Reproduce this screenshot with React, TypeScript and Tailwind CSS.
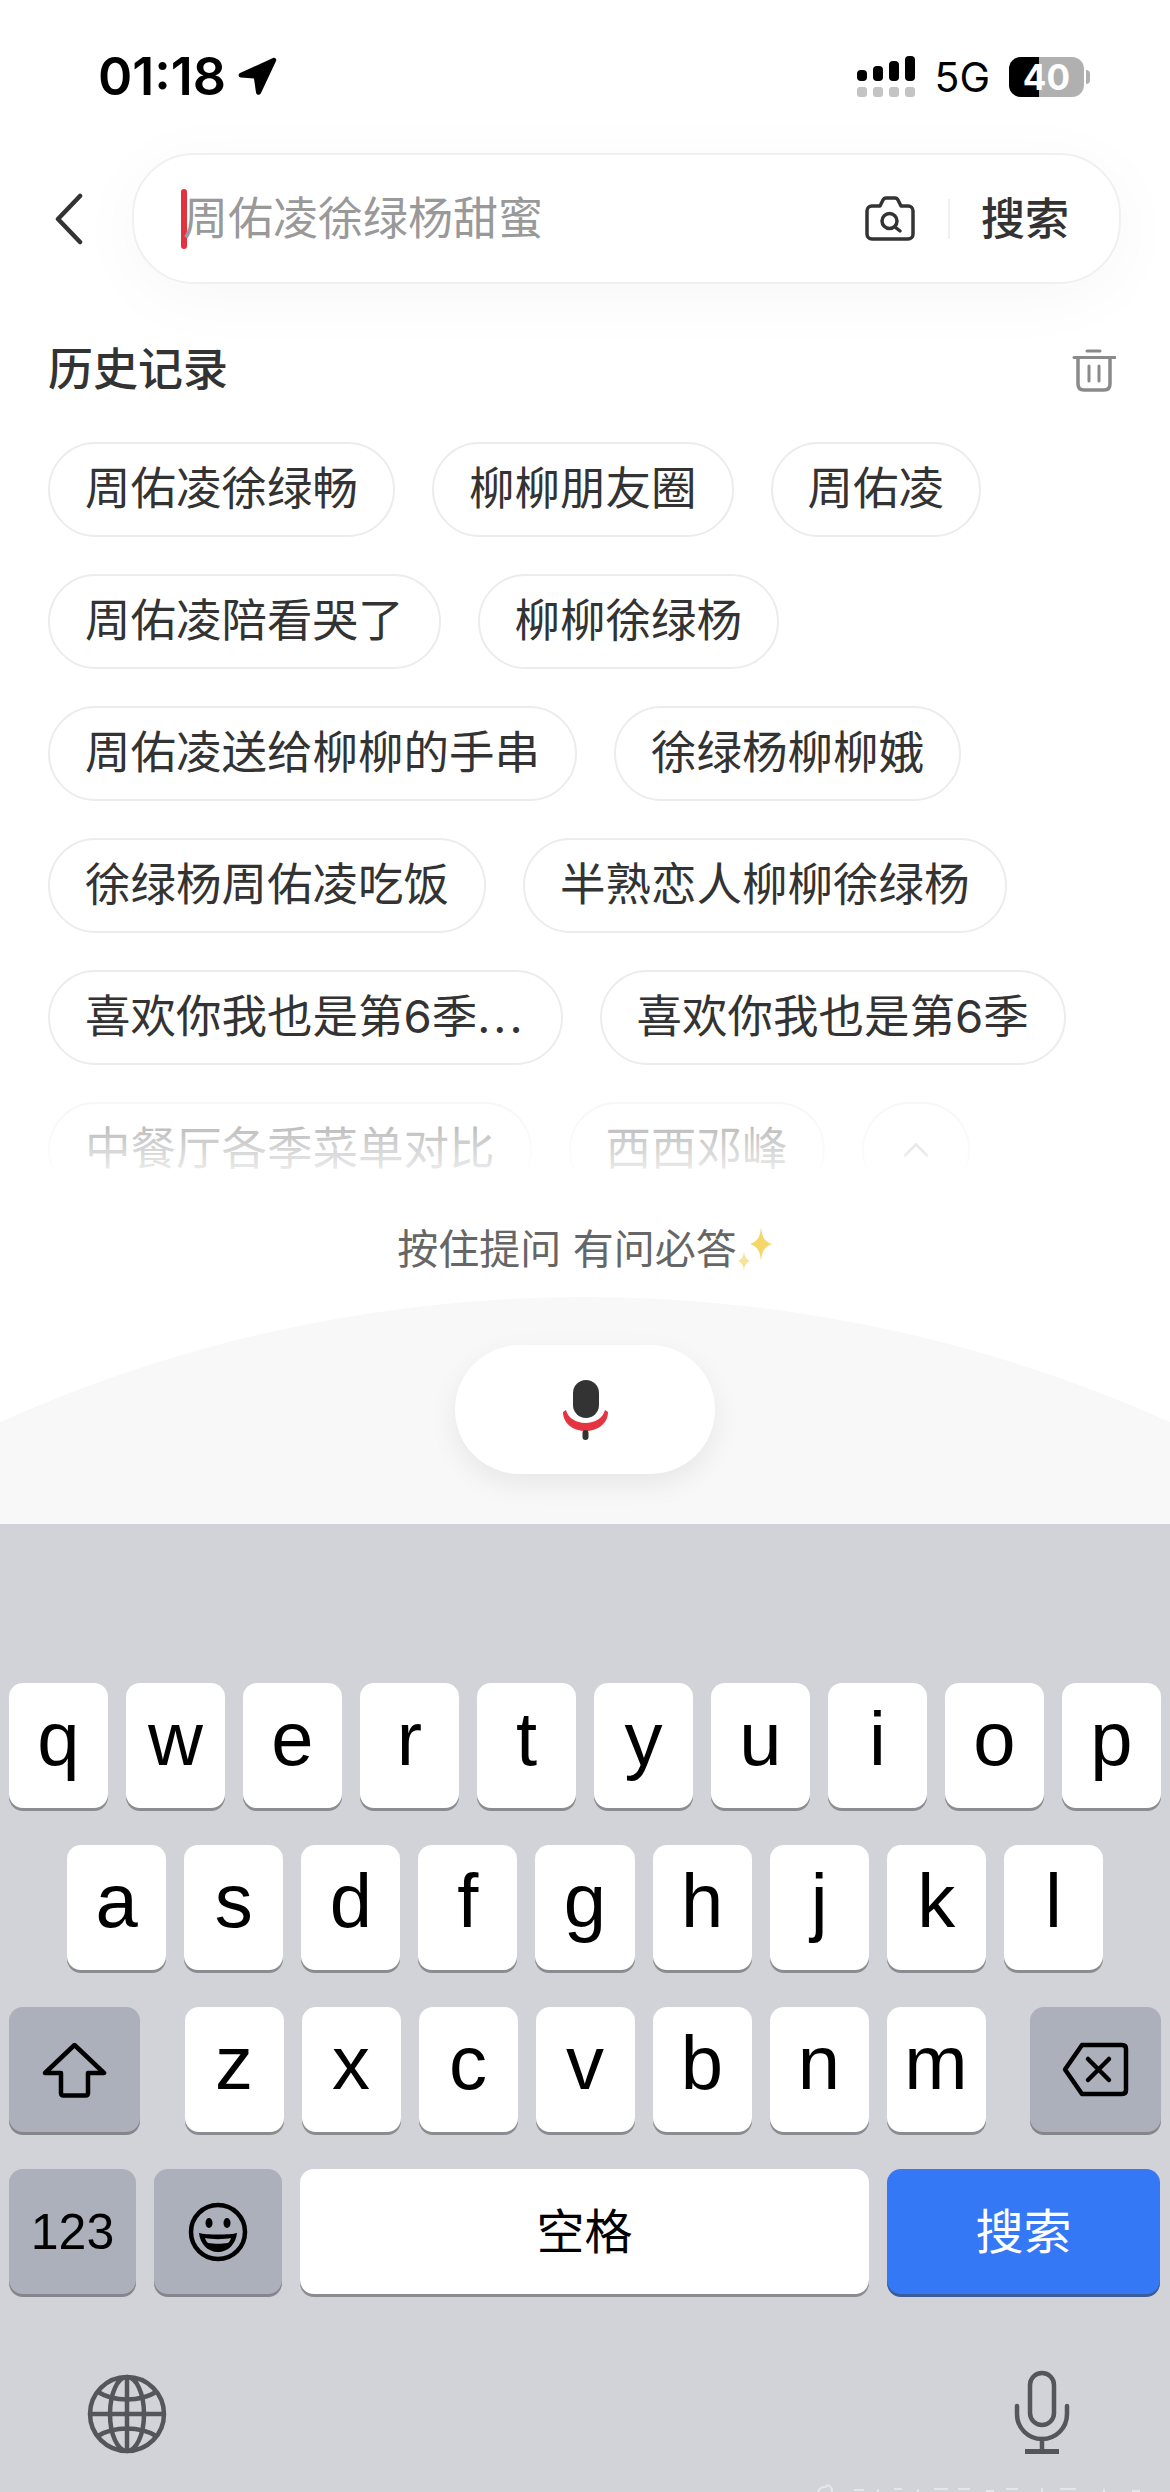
import { ChevronUp } from "lucide-react";

const HISTORY = [
  "周佑凌徐绿畅",
  "柳柳朋友圈",
  "周佑凌",
  "周佑凌陪看哭了",
  "柳柳徐绿杨",
  "周佑凌送给柳柳的手串",
  "徐绿杨柳柳娥",
  "徐绿杨周佑凌吃饭",
  "半熟恋人柳柳徐绿杨",
  "喜欢你我也是第6季...",
  "喜欢你我也是第6季",
  "中餐厅各季菜单对比",
  "西西邓峰",
];

const ROW_1 = ["q", "w", "e", "r", "t", "y", "u", "i", "o", "p"];
const ROW_2 = ["a", "s", "d", "f", "g", "h", "j", "k", "l"];
const ROW_3 = ["z", "x", "c", "v", "b", "n", "m"];

function StatusBar() {
  return (
    <div className="flex h-[153px] items-start justify-between pl-[98px] pr-[80px] pt-[50px] text-black">
      <div className="flex items-center gap-[11px]">
        <span className="text-[52px] font-semibold leading-[54px]">01:18</span>
        <svg width="40" height="40" viewBox="0 0 40 40" className="mt-[-2px]">
          <path d="M36 2 3 17c-2 1-2 4 1 4.500l13 1 2 14c.500 3 4 3 5 .500L39 5c1-2-1-4-3-3Z" fill="#000" />
        </svg>
      </div>
      <div className="flex items-center gap-[19px] pt-[6px]">
        <svg width="58" height="42" viewBox="0 0 58 42">
          <rect x="0" y="14" width="10" height="11" rx="4" fill="#000" />
          <rect x="16" y="10" width="10" height="15" rx="4" fill="#000" />
          <rect x="32" y="5" width="10" height="20" rx="4" fill="#000" />
          <rect x="48" y="0" width="10" height="25" rx="4" fill="#000" />
          <rect x="0" y="31" width="10" height="10" rx="3" fill="#c4c4c4" />
          <rect x="16" y="31" width="10" height="10" rx="3" fill="#c4c4c4" />
          <rect x="32" y="31" width="10" height="10" rx="3" fill="#c4c4c4" />
          <rect x="48" y="31" width="10" height="10" rx="3" fill="#c4c4c4" />
        </svg>
        <span className="text-[41px] leading-[42px]">5G</span>
        <div className="flex items-center gap-[2px]">
          <div className="relative flex h-[40px] w-[75px] overflow-hidden rounded-[12px] bg-[#b0b0b0]">
            <div className="h-full w-[30px] bg-black" />
            <span className="absolute inset-0 text-center text-[35px] font-bold leading-[40px] text-white">40</span>
          </div>
          <div className="h-[14px] w-[4px] rounded-r-full bg-[#b0b0b0]" />
        </div>
      </div>
    </div>
  );
}

function SearchBar() {
  return (
    <div className="flex h-[131px] items-center">
      <div className="flex w-[132px] pl-[54px]">
        <svg width="30" height="52" viewBox="0 0 30 52" fill="none">
          <path d="M26 3 4 26l22 23" stroke="#333" strokeWidth="4.500" strokeLinecap="round" strokeLinejoin="round" />
        </svg>
      </div>
      <div className="flex h-[131px] w-[989px] items-center rounded-[62px] border-2 border-[#f0f0f0] bg-white pl-[47px] pr-[50px] shadow-[0_12px_70px_rgba(0,0,0,0.035)]">
        <div className="h-[60px] w-[6px] rounded-full bg-[#e1323f]" />
        <span className="-ml-[4px] text-[45px] leading-[60px] text-[#999]">周佑凌徐绿杨甜蜜</span>
        <svg width="52" height="48" viewBox="0 0 52 48" fill="none" className="ml-auto">
          <path
            d="M8 11h8l3-6c.500-1 1.500-2 3-2h9c1.500 0 2.500 1 3 2l3 6h7c3 0 5 2 5 5v23c0 3-2 5-5 5H8c-3 0-5-2-5-5V16c0-3 2-5 5-5Z"
            stroke="#333"
            strokeWidth="3.500"
            strokeLinejoin="round"
          />
          <circle cx="25.500" cy="26" r="7.500" stroke="#333" strokeWidth="3.500" />
          <path d="m31 32 5 4" stroke="#333" strokeWidth="3.500" strokeLinecap="round" />
        </svg>
        <div className="ml-[32px] h-[40px] w-[2px] bg-[#f1f1f1]" />
        <span className="ml-[31px] text-[44px] font-medium leading-[60px] text-[#333]">搜索</span>
      </div>
    </div>
  );
}

function HistoryHeader() {
  return (
    <div className="flex h-[158px] items-start justify-between pl-[48px] pr-[54px] pt-[62px]">
      <span className="text-[45px] font-medium leading-[48px] text-[#333]">历史记录</span>
      <svg width="44" height="44" viewBox="0 0 44 44" fill="none" className="mt-[2px]">
        <path d="M15 3h13" stroke="#8a8a8a" strokeWidth="3" strokeLinecap="round" />
        <path d="M2 9.500h41" stroke="#8a8a8a" strokeWidth="3" strokeLinecap="round" />
        <path d="M6 10v26c0 4 2 6 6 6h20c4 0 6-2 6-6V10" stroke="#8a8a8a" strokeWidth="3.500" />
        <path d="M17 18v15M27 18v15" stroke="#8a8a8a" strokeWidth="3" strokeLinecap="round" />
      </svg>
    </div>
  );
}

function HistoryChips() {
  return (
    <div className="relative h-[728px] overflow-hidden">
      <div className="flex flex-wrap gap-x-[37px] gap-y-[37px] pl-[48px] pr-[48px]">
        {HISTORY.map((item) => (
          <div
            key={item}
            className="flex h-[95px] items-center rounded-full border-2 border-[#ececec] bg-white px-[35px] pb-[2px] text-[45.500px] leading-[60px] text-[#333]"
          >
            {item.endsWith("...") ? (
              <>
                {item.slice(0, -3)}
                <span className="tracking-[3px]">...</span>
              </>
            ) : (
              item
            )}
          </div>
        ))}
        <div className="flex h-[95px] w-[108px] items-center justify-center rounded-full border-2 border-[#ececec] bg-white">
          <ChevronUp size={44} strokeWidth={1.5} color="#999" />
        </div>
      </div>
      <div className="absolute inset-x-0 bottom-0 h-[70px] bg-linear-to-t from-white/90 to-white/55" />
    </div>
  );
}

function VoicePrompt() {
  return (
    <>
      <div className="flex h-[127px] justify-center pt-[56px]">
        <span className="text-[41px] leading-[46px] text-[#666]">按住提问 有问必答</span>
        <svg width="36" height="44" viewBox="0 0 36 44" className="mt-[1px]">
          <path d="M24 0c1 10 3 14 11 17-8 3-10 7-11 17-1-10-3-14-11-17 8-3 10-7 11-17Z" fill="#f5d668" />
          <path d="M7 24c.500 6 2 8 6 10-4 2-5.500 4-6 10-.500-6-2-8-6-10 4-2 5.500-4 6-10Z" fill="#f7e29a" />
        </svg>
      </div>
      <div className="relative flex h-[227px] justify-center overflow-hidden pt-[48px]">
        <div className="absolute left-1/2 top-0 h-[2860px] w-[2860px] -translate-x-1/2 rounded-full bg-[#f8f8f8]" />
        <div className="relative flex h-[129px] w-[260px] items-center justify-center rounded-full bg-white shadow-[0_10px_28px_rgba(0,0,0,0.07)]">
          <svg width="47" height="60" viewBox="0 0 47 60">
            <rect x="11" y="0" width="26" height="38" rx="13" fill="#333" />
            <path
              d="M1 32 4 30c2 8 10 13 19.500 13S41 38 43 30l3 2c0 12-11 19-22.500 19S1 44 1 32Z"
              fill="#e5343f"
            />
            <rect x="20.500" y="50" width="6" height="10" rx="3" fill="#333" />
          </svg>
        </div>
      </div>
    </>
  );
}

function Key({ label }: { label: string }) {
  return (
    <div className="flex h-[125px] flex-1 items-center justify-center rounded-[14px] bg-white pb-[14px] font-['Liberation_Sans',sans-serif] text-[76px] leading-[84px] text-black shadow-[0_3px_0_#8b8c90]">
      {label}
    </div>
  );
}

function Keyboard() {
  return (
    <div className="relative flex h-[968px] flex-col gap-[37px] bg-[#d1d3d9] pt-[159px]">
      <div className="flex gap-[18px] px-[9px]">
        {ROW_1.map((k) => (
          <Key key={k} label={k} />
        ))}
      </div>
      <div className="flex gap-[18px] px-[67px]">
        {ROW_2.map((k) => (
          <Key key={k} label={k} />
        ))}
      </div>
      <div className="flex items-center justify-between px-[9px]">
        <div className="flex h-[125px] w-[131px] items-center justify-center rounded-[14px] bg-[#abb0bb] shadow-[0_3px_0_#85868c]">
          <svg width="65" height="56" viewBox="0 0 65 56" fill="none">
            <path
              d="M32.500 3 62 31H46v20c0 1.500-1 2.500-2.500 2.500h-22C20 53.500 19 52.500 19 51V31H3L32.500 3Z"
              stroke="#000"
              strokeWidth="4.500"
              strokeLinejoin="round"
            />
          </svg>
        </div>
        <div className="flex w-[801px] gap-[18px]">
          {ROW_3.map((k) => (
            <Key key={k} label={k} />
          ))}
        </div>
        <div className="flex h-[125px] w-[131px] items-center justify-center rounded-[14px] bg-[#abb0bb] shadow-[0_3px_0_#85868c]">
          <svg width="67" height="55" viewBox="0 0 67 55" fill="none">
            <path
              d="M20 3h40c2.500 0 4 1.500 4 4v41c0 2.500-1.500 4-4 4H20L3 27.500 20 3Z"
              stroke="#000"
              strokeWidth="4.500"
              strokeLinejoin="round"
            />
            <path d="m26 17 21 21M47 17 26 38" stroke="#000" strokeWidth="4.500" strokeLinecap="round" />
          </svg>
        </div>
      </div>
      <div className="flex gap-[18px] px-[9px]">
        <div className="flex h-[125px] w-[127px] items-center justify-center rounded-[14px] bg-[#abb0bb] font-['Liberation_Sans',sans-serif] text-[50px] leading-[56px] text-black shadow-[0_3px_0_#85868c]">
          123
        </div>
        <div className="flex h-[125px] w-[128px] items-center justify-center rounded-[14px] bg-[#abb0bb] shadow-[0_3px_0_#85868c]">
          <svg width="60" height="60" viewBox="0 0 60 60" fill="none">
            <circle cx="30" cy="30" r="27" stroke="#000" strokeWidth="4.500" />
            <ellipse cx="21" cy="21" rx="3.500" ry="5" fill="#000" />
            <ellipse cx="39" cy="21" rx="3.500" ry="5" fill="#000" />
            <path d="M11 31c6 2 32 2 38 0-1 11-9 19-19 19s-18-8-19-19Z" fill="#000" />
            <path d="M17 36c7 1.500 19 1.500 26 0-1 3-2 4-3 5-6 1-14 1-20 0-1-1-2-2-3-5Z" fill="#abb0bb" />
          </svg>
        </div>
        <div className="flex h-[125px] w-[569px] items-center justify-center rounded-[14px] bg-white text-[48px] leading-[60px] text-black shadow-[0_3px_0_#8b8c90]">
          空格
        </div>
        <div className="flex h-[125px] w-[273px] items-center justify-center rounded-[14px] bg-[#3478f6] text-[48px] leading-[60px] text-white shadow-[0_3px_0_#3b5c96]">
          搜索
        </div>
      </div>
      <div className="mt-[39px] flex items-end justify-between pl-[87px] pr-[100px]">
        <svg width="80" height="80" viewBox="0 0 80 80" fill="none" stroke="#54565c" strokeWidth="4.500">
          <circle cx="40" cy="40" r="37" />
          <ellipse cx="40" cy="40" rx="17" ry="37" />
          <path d="M40 3v74M3 40h74" />
          <path d="M11 18c16 10 42 10 58 0M11 62c16-10 42-10 58 0" />
        </svg>
        <svg width="56" height="84" viewBox="0 0 56 84" fill="none" stroke="#54565c" strokeWidth="4.500" strokeLinecap="round">
          <rect x="16" y="3" width="24" height="52" rx="12" />
          <path d="M3 36v8c0 14 11 25 25 25s25-11 25-25v-8" />
          <path d="M28 69v12" />
          <path d="M11 81.500h34" strokeWidth="5" strokeLinecap="butt" />
        </svg>
      </div>
      {/* filigrane coupé par le bas de l'écran, illisible dans la capture */}
      <svg width="340" height="8" viewBox="0 0 340 8" fill="none" stroke="#e6e6ea" strokeWidth="2" className="absolute bottom-0 left-[816px]">
        <path d="M2 8c1-4 5-6 9-5M16 8c0-4-2-7-6-7" />
        <path d="M38 6h10M62 8V5M78 5h8M102 8V5M118 5h14M142 5h12M170 7h8M190 5h12M226 8V4M244 5h16M288 8V5M316 7h8" />
      </svg>
    </div>
  );
}

export default function App() {
  return (
    <div className="flex h-[2492px] w-[1170px] flex-col overflow-hidden bg-white font-['Inter','Noto_Sans_CJK_SC',sans-serif]">
      <StatusBar />
      <SearchBar />
      <HistoryHeader />
      <HistoryChips />
      <VoicePrompt />
      <Keyboard />
    </div>
  );
}
